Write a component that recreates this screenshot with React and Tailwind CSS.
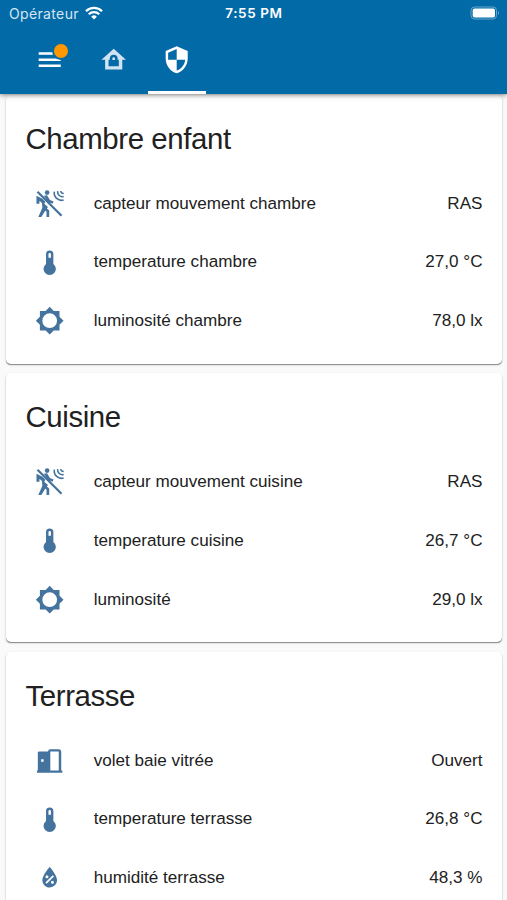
import React from 'react';

const icons = {
  motionOff: (
    <g>
      <circle cx="9.9" cy="2.9" r="1.9" />
      <path d="M1.4 2.9L2.7 1.6L22.3 21.2L21 22.5ZM1.2 5.6L6 8L8.4 10.4L7.2 13L4.6 10.4L3.6 9.8V12H1.2ZM5.6 10.4L10.6 14.6L8.6 17.4L5.2 22.8H2.7L6 15.4ZM8.3 14.8L11.6 17.6V22.8H9.4V18.6L7.4 16.5ZM7.2 5.6L9.8 5.2L12.2 8.9L15.2 10.3L14.3 12L11.2 10.6Z" />
      <path d="M15.8 2.2A6 6 0 0 0 23.4 9M18.5 1.8A4 4 0 0 0 23.4 6.2M21 1.6A2 2 0 0 0 23.4 3.5" fill="none" stroke="currentColor" strokeWidth="1.3" />
    </g>
  ),
  thermometer: <path d="M15 13V5A3 3 0 0 0 9 5V13A5 5 0 1 0 15 13M12 4A1 1 0 0 1 13 5V8H11V5A1 1 0 0 1 12 4Z" />,
  brightness: <path d="M12,18A6,6 0 0,1 6,12A6,6 0 0,1 12,6A6,6 0 0,1 18,12A6,6 0 0,1 12,18M20,15.31L23.31,12L20,8.69V4H15.31L12,0.69L8.69,4H4V8.69L0.69,12L4,15.31V20H8.69L12,23.31L15.31,20H20V15.31Z" />,
  door: (
    <path fillRule="evenodd" d="M2.3 20V5.6Q2.3 4.4 3.5 4.4H10.6Q10.8 2.6 12.6 2.6H19.3Q21.4 2.6 21.4 4.7V20H22.3V21.8H1.6V20H2.3ZM12.5 4.4V20H19.4V4.4ZM5 10.8V12.8H7V10.8Z" />
  ),
  humidity: (
    <path d="M12,3.25C12,3.25 6,10 6,14C6,17.32 8.69,20 12,20A6,6 0 0,0 18,14C18,10 12,3.25 12,3.25M14.47,9.97L15.53,11.03L9.53,17.03L8.47,15.97M9.75,10A1.25,1.25 0 0,1 11,11.25A1.25,1.25 0 0,1 9.75,12.5A1.25,1.25 0 0,1 8.5,11.25A1.25,1.25 0 0,1 9.75,10M14.25,14.5A1.25,1.25 0 0,1 15.5,15.75A1.25,1.25 0 0,1 14.25,17A1.25,1.25 0 0,1 13,15.75A1.25,1.25 0 0,1 14.25,14.5Z" />
  ),
  menu: <path d="M3,6H21V8H3V6M3,11H21V13H3V11M3,16H21V18H3V16Z" />,
  homeLock: (
    <path fillRule="evenodd" d="M12 3L2 12H5V20H19V12H22ZM12 8A3.2 3.2 0 0 1 15.2 11.2V12H16.2V17.4H7.8V12H8.8V11.2A3.2 3.2 0 0 1 12 8ZM12 10A1.1 1.1 0 0 0 10.9 11.1V12.3H13.1V11.1A1.1 1.1 0 0 0 12 10Z" />
  ),
  shield: <path d="M12,12H19C18.47,16.11 15.72,19.78 12,20.92V12H5V6.3L12,3.19M12,1L3,5V11C3,16.55 6.84,21.73 12,23C17.16,21.73 21,16.55 21,11V5L12,1Z" />,
};

const Icon = ({ name, className }) => (
  <svg viewBox="0 0 24 24" fill="currentColor" className={`size-[29.4px] shrink-0 ${className || ''}`}>
    {icons[name]}
  </svg>
);

const rooms = [
  {
    title: 'Chambre enfant',
    rows: [
      { icon: 'motionOff', label: 'capteur mouvement chambre', value: 'RAS' },
      { icon: 'thermometer', label: 'temperature chambre', value: '27,0 °C' },
      { icon: 'brightness', label: 'luminosité chambre', value: '78,0 lx' },
    ],
  },
  {
    title: 'Cuisine',
    rows: [
      { icon: 'motionOff', label: 'capteur mouvement cuisine', value: 'RAS' },
      { icon: 'thermometer', label: 'temperature cuisine', value: '26,7 °C' },
      { icon: 'brightness', label: 'luminosité', value: '29,0 lx' },
    ],
  },
  {
    title: 'Terrasse',
    rows: [
      { icon: 'door', label: 'volet baie vitrée', value: 'Ouvert' },
      { icon: 'thermometer', label: 'temperature terrasse', value: '26,8 °C' },
      { icon: 'humidity', label: 'humidité terrasse', value: '48,3 %' },
    ],
  },
];

const StatusBar = () => (
  <div className="grid h-[27px] grid-cols-3 items-center pl-[8px] pr-[6px] font-['Inter',sans-serif] text-[13.5px] text-white">
    <div className="flex items-center gap-[6px] pl-[1px] text-[#d5e6f2]">
      <span className="text-[14px] tracking-[0.35px]">Opérateur</span>
      <svg viewBox="0 0 18 14" className="-mt-[1px] h-[14px] w-[18px]" fill="none" stroke="white" strokeWidth="2.3">
        <path d="M1 5.2A11.4 11.4 0 0 1 17 5.2M3.8 8.3A7.4 7.4 0 0 1 14.2 8.3" />
        <path d="M9 13.5L6.2 10.7A4 4 0 0 1 11.8 10.7Z" fill="white" stroke="none" />
      </svg>
    </div>
    <span className="-ml-[1px] text-center font-semibold tracking-[0.6px]">7:55 PM</span>
    <svg viewBox="0 0 31 14" className="-mt-[1px] h-[14px] w-[31px] justify-self-end">
      <rect x="1" y="1" width="25.5" height="12" rx="3.5" fill="none" stroke="#69a5cc" />
      <rect x="2.7" y="2.5" width="22.3" height="9" rx="1.8" fill="white" />
      <path d="M28 5Q30 7 28 9Z" fill="#69a5cc" />
    </svg>
  </div>
);

const Header = () => (
  <header className="relative z-10 h-[94px] shrink-0 bg-[#036aa8] shadow-[0_1px_5px_rgba(0,0,0,0.5)]">
    <StatusBar />
    <nav className="flex h-[67px] pl-[35px] text-white">
      <div className="relative flex w-[29.4px] items-center justify-center pb-[2px]">
        <Icon name="menu" />
        <span className="absolute left-[16.5px] top-[15px] size-[18px] rounded-full border-2 border-[#036aa8] bg-[#ff9800]" />
      </div>
      <div className="ml-[20px] flex w-[58px] items-center justify-center pb-[2px]">
        <Icon name="homeLock" className="text-[#d1e3f1]" />
      </div>
      <div className="ml-[5.3px] flex w-[58.7px] items-center justify-center border-b-[3px] border-white pt-[2px]">
        <Icon name="shield" />
      </div>
    </nav>
  </header>
);

const RoomCard = ({ room }) => (
  <section className="h-[269px] shrink-0 rounded-[5px] bg-white px-[19.5px] pt-[19px] shadow-[0_1.5px_1px_-0.5px_rgba(0,0,0,0.4),0_1px_3px_rgba(0,0,0,0.12)]">
    <h2 className="mb-[15.6px] h-[50px] text-[29.4px] leading-[50px] tracking-[-0.4px]">{room.title}</h2>
    <div className="space-y-[9.7px]">
      {room.rows.map((row) => (
        <div key={row.label} className="flex h-[49px] items-center">
          <div className="flex w-[49px] justify-center text-[#44739e]">
            <Icon name={row.icon} />
          </div>
          <span className="ml-[19.2px] flex-1 text-[17.1px]">{row.label}</span>
          <span className="text-[17.1px]">{row.value}</span>
        </div>
      ))}
    </div>
  </section>
);

const App = () => (
  <div className="flex h-screen flex-col overflow-hidden bg-[#fafafa] font-['Liberation_Sans',sans-serif] text-[#212121]">
    <Header />
    <main className="flex flex-col gap-[9.5px] pl-[6px] pr-[5px] pt-[0.5px]">
      {rooms.map((room) => (
        <RoomCard key={room.title} room={room} />
      ))}
    </main>
  </div>
);

export default App;
